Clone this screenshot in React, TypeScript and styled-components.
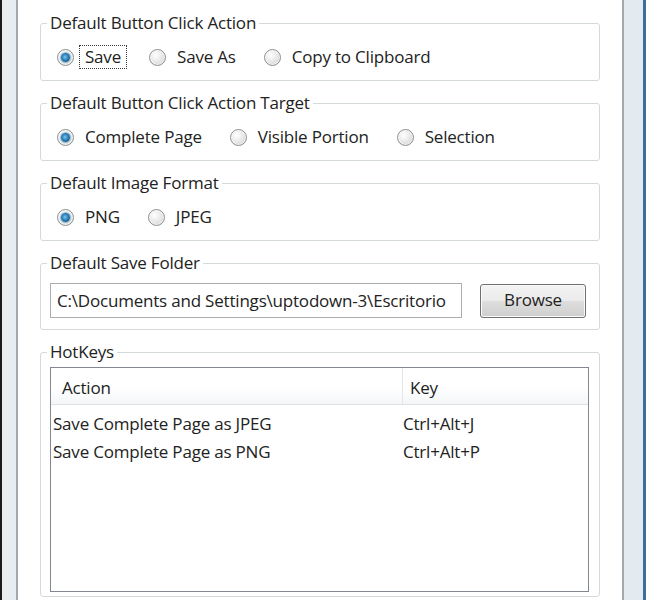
import React from "react";
import styled, { createGlobalStyle } from "styled-components";

const GlobalStyle = createGlobalStyle`
  html, body { margin: 0; padding: 0; background: #ffffff; }
  body {
    font-family: "Open Sans", "Noto Sans", "Liberation Sans", sans-serif;
    font-size: 17px;
    letter-spacing: -0.2px;
    color: #222222;
  }
  * { box-sizing: border-box; }
`;

const Window = styled.div`
  display: flex;
  width: 646px;
  height: 600px;
  overflow: hidden;
  background: #ffffff;
`;

const LeftFrame = styled.div`
  flex: none;
  width: 18px;
  background: #e7edf0;
  border-left: 2px solid #1c1c1c;
  border-right: 2px solid #a3a8ac;
`;

const RightFrame = styled.div`
  flex: none;
  width: 24px;
  background: #e4ebf0;
  border-left: 2px solid #a3a8ac;
  border-right: 3px solid #3d6f9c;
`;

const Content = styled.div`
  flex: 1;
  min-width: 0;
  padding: 13px 22px 0 22px;
  display: flex;
  flex-direction: column;
  gap: 12px;
`;

const Group = styled.fieldset<{ $tight?: boolean }>`
  margin: 0;
  min-width: 0;
  border: 1px solid #d4d9dc;
  border-radius: 3px;
  padding: 0 12px ${(p) => (p.$tight ? "4px" : "11px")} 6px;
`;

const Legend = styled.legend`
  padding: 0 3px;
  line-height: 20px;
  height: 20px;
`;

const RadioRow = styled.div`
  display: flex;
  align-items: center;
  gap: 22px;
  height: 24px;
  margin-top: 12px;
  padding-left: 10px;
`;

const RadioItem = styled.label`
  display: flex;
  align-items: center;
  cursor: default;
`;

const RadioCircle = styled.span<{ $checked?: boolean }>`
  flex: none;
  width: 17px;
  height: 17px;
  border-radius: 50%;
  border: 1px solid #8d8f91;
  background: radial-gradient(circle at 38% 35%, #ffffff 0%, #ececec 40%, #cdcdcd 100%);
  display: flex;
  align-items: center;
  justify-content: center;
  box-shadow: inset 0 0 0 1px rgba(255, 255, 255, 0.6);
  &::after {
    content: "";
    display: ${(p) => (p.$checked ? "block" : "none")};
    width: 9px;
    height: 9px;
    border-radius: 50%;
    background: radial-gradient(circle at 45% 45%, #7cc6ec 0%, #2a7fb8 45%, #0e3d66 100%);
    box-shadow: 0 0 0 1px rgba(120, 170, 205, 0.7);
  }
`;

const RadioText = styled.span<{ $focused?: boolean }>`
  margin-left: 5px;
  padding: 0 5px;
  height: 24px;
  line-height: 22px;
  border: 1px dotted ${(p) => (p.$focused ? "#3a3a3a" : "transparent")};
  white-space: nowrap;
`;

const FolderRow = styled.div`
  display: flex;
  align-items: center;
  gap: 18px;
  margin-top: 10px;
  padding-left: 3px;
`;

const PathField = styled.div`
  width: 412px;
  height: 35px;
  border: 1px solid #abadb0;
  background: #ffffff;
  padding-left: 6px;
  line-height: 33px;
  white-space: nowrap;
  overflow: hidden;
`;

const Button = styled.button`
  width: 106px;
  height: 34px;
  border: 1px solid #707070;
  border-radius: 3px;
  font: inherit;
  letter-spacing: inherit;
  color: #222222;
  background: linear-gradient(#f3f3f3 0%, #ebebeb 48%, #dddddd 52%, #cfcfcf 100%);
  box-shadow: inset 0 0 0 1px #fbfbfb;
  padding: 0 0 2px;
`;

const ListView = styled.div`
  margin-top: 5px;
  margin-left: 3px;
  width: 539px;
  height: 225px;
  border: 1px solid #838890;
  background: #ffffff;
  display: flex;
  flex-direction: column;
`;

const HeaderRow = styled.div`
  display: grid;
  grid-template-columns: 351px 1fr;
  height: 37px;
  background: linear-gradient(#ffffff 0%, #ffffff 55%, #f4f6f8 100%);
  border-bottom: 1px solid #dfe2e5;
`;

const HeaderCell = styled.div<{ $divider?: boolean }>`
  display: flex;
  align-items: center;
  padding-left: ${(p) => (p.$divider ? "7px" : "11px")};
  padding-top: 3px;
  border-left: ${(p) => (p.$divider ? "1px solid #e3e6e9" : "none")};
`;

const Rows = styled.div`
  padding-top: 4px;
`;

const Row = styled.div`
  display: grid;
  grid-template-columns: 351px 1fr;
  height: 28px;
  align-items: center;
`;

const Cell = styled.div<{ $key?: boolean }>`
  padding-left: ${(p) => (p.$key ? "1px" : "2px")};
  white-space: nowrap;
`;

type RadioOpt = { label: string; checked?: boolean; focused?: boolean };

const RadioGroup: React.FC<{ title: string; options: RadioOpt[] }> = ({ title, options }) => (
  <Group>
    <Legend>{title}</Legend>
    <RadioRow>
      {options.map((o) => (
        <RadioItem key={o.label}>
          <RadioCircle $checked={o.checked} />
          <RadioText $focused={o.focused}>{o.label}</RadioText>
        </RadioItem>
      ))}
    </RadioRow>
  </Group>
);

const hotkeys = [
  { action: "Save Complete Page as JPEG", key: "Ctrl+Alt+J" },
  { action: "Save Complete Page as PNG", key: "Ctrl+Alt+P" },
];

export default function App() {
  return (
    <>
      <GlobalStyle />
      <Window>
        <LeftFrame />
        <Content>
          <RadioGroup
            title="Default Button Click Action"
            options={[
              { label: "Save", checked: true, focused: true },
              { label: "Save As" },
              { label: "Copy to Clipboard" },
            ]}
          />
          <RadioGroup
            title="Default Button Click Action Target"
            options={[
              { label: "Complete Page", checked: true },
              { label: "Visible Portion" },
              { label: "Selection" },
            ]}
          />
          <RadioGroup
            title="Default Image Format"
            options={[{ label: "PNG", checked: true }, { label: "JPEG" }]}
          />
          <Group>
            <Legend>Default Save Folder</Legend>
            <FolderRow>
              <PathField>{"C:\\Documents and Settings\\uptodown-3\\Escritorio"}</PathField>
              <Button>Browse</Button>
            </FolderRow>
          </Group>
          <Group $tight>
            <Legend>HotKeys</Legend>
            <ListView>
              <HeaderRow>
                <HeaderCell>Action</HeaderCell>
                <HeaderCell $divider>Key</HeaderCell>
              </HeaderRow>
              <Rows>
                {hotkeys.map((h) => (
                  <Row key={h.key}>
                    <Cell>{h.action}</Cell>
                    <Cell $key>{h.key}</Cell>
                  </Row>
                ))}
              </Rows>
            </ListView>
          </Group>
        </Content>
        <RightFrame />
      </Window>
    </>
  );
}
